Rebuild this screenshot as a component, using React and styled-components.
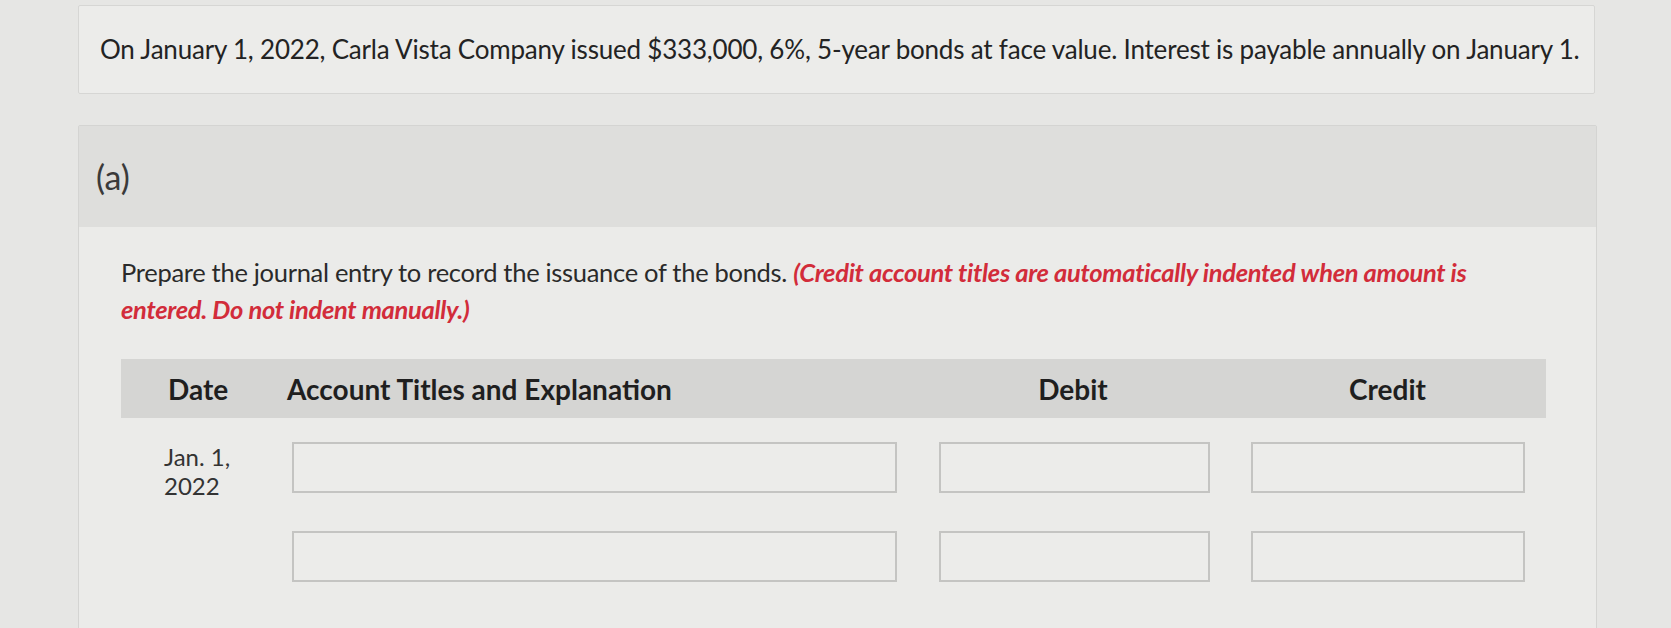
import React from "react";
import styled, { createGlobalStyle } from "styled-components";

const GlobalStyle = createGlobalStyle`
  html, body {
    margin: 0;
    padding: 0;
    background: #e6e6e4;
    font-family: "Lato", "Open Sans", sans-serif;
    color: #262626;
  }
`;

const Page = styled.div`
  width: 1671px;
  height: 628px;
  overflow: hidden;
  padding: 5px 0 0 78px;
  box-sizing: border-box;
`;

const QuestionCard = styled.div`
  width: 1517px;
  height: 89px;
  box-sizing: border-box;
  background: #ececea;
  border: 1px solid #d6d6d4;
  border-radius: 2px;
  display: flex;
  align-items: center;
  padding: 0 0 2px 21px;
  font-size: 26px;
  letter-spacing: -0.2px;
  color: #232323;
`;

const Section = styled.div`
  width: 1517px;
  margin-top: 31px;
  border: 1px solid #d4d4d2;
  border-radius: 2px;
  background: #ebebe9;
`;

const SectionHeader = styled.div`
  height: 101px;
  background: #dededc;
  display: flex;
  align-items: center;
  padding: 0 0 0 17px;
  font-size: 34px;
  color: #3a3a3a;
`;

const SectionBody = styled.div`
  padding: 27px 50px 80px 42px;
`;

const Instructions = styled.p`
  margin: 0;
  max-width: 1370px;
  font-size: 25.5px;
  line-height: 37px;
  letter-spacing: -0.3px;
  color: #2a2a2a;
`;

const Hint = styled.em`
  color: #d22c3a;
  font-weight: 700;
`;

const Table = styled.div`
  margin-top: 31px;
  width: 1425px;
`;

const Columns = `
  display: grid;
  grid-template-columns: 171px 647px 312px 295px;
`;

const HeaderRow = styled.div`
  ${Columns}
  height: 59px;
  align-items: center;
  background: #d5d5d3;
  font-weight: 700;
  font-size: 28px;
  color: #1f1f1f;
`;

const HeadCell = styled.div`
  padding-left: ${(p) => p.$pad || 0}px;
  margin-left: ${(p) => p.$shift || 0}px;
  text-align: ${(p) => p.$align || "left"};
`;

const Row = styled.div`
  ${Columns}
  margin-top: ${(p) => p.$top}px;
  align-items: start;
`;

const DateCell = styled.div`
  font-size: 24px;
  line-height: 29px;
  padding: 0 0 0 43px;
  color: #333;
`;

const Field = styled.div`
  height: 51px;
  width: ${(p) => p.$w}px;
  box-sizing: border-box;
  border: 2px solid #c4c4c2;
  background: #ececea;
`;

const JournalRow = ({ top, date }) => (
  <Row $top={top}>
    <DateCell>{date}</DateCell>
    <Field $w={605} />
    <Field $w={271} />
    <Field $w={274} />
  </Row>
);

const App = () => (
  <>
    <GlobalStyle />
    <Page>
      <QuestionCard>
        On January 1, 2022, Carla Vista Company issued $333,000, 6%, 5-year
        bonds at face value. Interest is payable annually on January 1.
      </QuestionCard>
      <Section>
        <SectionHeader>(a)</SectionHeader>
        <SectionBody>
          <Instructions>
            Prepare the journal entry to record the issuance of the bonds.{" "}
            <Hint>
              (Credit account titles are automatically indented when amount is
              entered. Do not indent manually.)
            </Hint>
          </Instructions>
          <Table>
            <HeaderRow>
              <HeadCell $pad={47}>Date</HeadCell>
              <HeadCell $shift={-5}>Account Titles and Explanation</HeadCell>
              <HeadCell $align="center" $shift={-44}>
                Debit
              </HeadCell>
              <HeadCell $align="center" $shift={-22}>
                Credit
              </HeadCell>
            </HeaderRow>
            <JournalRow
              top={24}
              date={
                <>
                  Jan. 1,
                  <br />
                  2022
                </>
              }
            />
            <JournalRow top={31} />
          </Table>
        </SectionBody>
      </Section>
    </Page>
  </>
);

export default App;
